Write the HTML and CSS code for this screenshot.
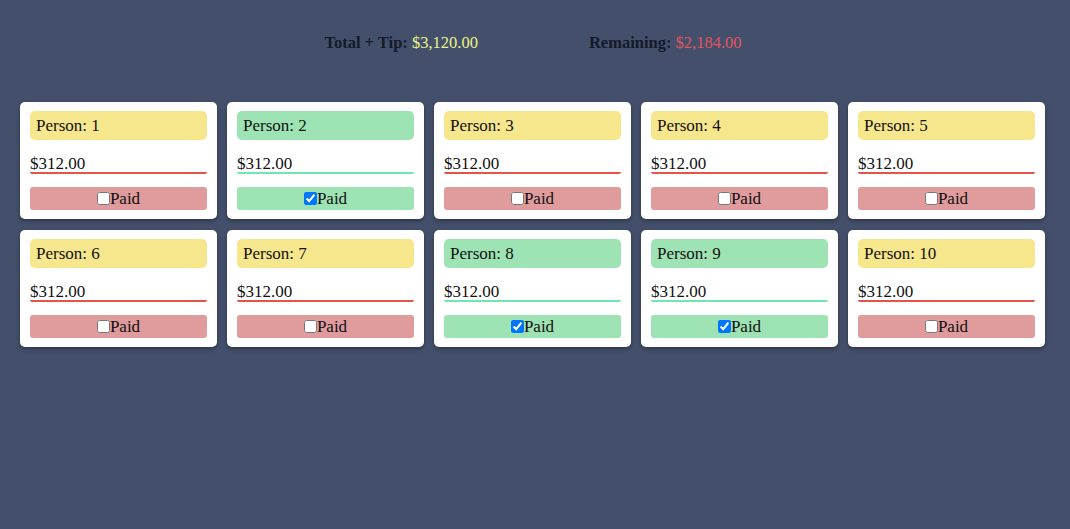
FILE: index.html
```html
<!DOCTYPE html>
<html>
<head>
<meta charset="utf-8">
<link rel="stylesheet" href="styles.css">
</head>
<body>
<header class="summary">
  <div class="stat"><b>Total + Tip:</b> <span class="total">$3,120.00</span></div>
  <div class="stat"><b>Remaining:</b> <span class="remaining">$2,184.00</span></div>
</header>
<main class="grid">
  <div class="card"><div class="name unpaid">Person: 1</div><div class="amount unpaid">$312.00</div><label class="paid unpaid"><input type="checkbox">Paid</label></div>
  <div class="card"><div class="name ok">Person: 2</div><div class="amount ok">$312.00</div><label class="paid ok"><input type="checkbox" checked>Paid</label></div>
  <div class="card"><div class="name unpaid">Person: 3</div><div class="amount unpaid">$312.00</div><label class="paid unpaid"><input type="checkbox">Paid</label></div>
  <div class="card"><div class="name unpaid">Person: 4</div><div class="amount unpaid">$312.00</div><label class="paid unpaid"><input type="checkbox">Paid</label></div>
  <div class="card"><div class="name unpaid">Person: 5</div><div class="amount unpaid">$312.00</div><label class="paid unpaid"><input type="checkbox">Paid</label></div>
  <div class="card"><div class="name unpaid">Person: 6</div><div class="amount unpaid">$312.00</div><label class="paid unpaid"><input type="checkbox">Paid</label></div>
  <div class="card"><div class="name unpaid">Person: 7</div><div class="amount unpaid">$312.00</div><label class="paid unpaid"><input type="checkbox">Paid</label></div>
  <div class="card"><div class="name ok">Person: 8</div><div class="amount ok">$312.00</div><label class="paid ok"><input type="checkbox" checked>Paid</label></div>
  <div class="card"><div class="name ok">Person: 9</div><div class="amount ok">$312.00</div><label class="paid ok"><input type="checkbox" checked>Paid</label></div>
  <div class="card"><div class="name unpaid">Person: 10</div><div class="amount unpaid">$312.00</div><label class="paid unpaid"><input type="checkbox">Paid</label></div>
</main>
</body>
</html>
```
FILE: styles.css
```css
html, body {
  margin: 0;
  padding: 0;
}
body {
  background: #44506b;
  font-family: "Liberation Serif", "DejaVu Serif", serif;
  color: #111;
  width: 1070px;
  height: 529px;
  overflow: hidden;
}
.summary {
  display: flex;
  justify-content: center;
  gap: 111px;
  padding-top: 33px;
  padding-right: 4px;
  height: 102px;
  box-sizing: border-box;
  font-size: 16.5px;
  line-height: 20px;
}
.stat b {
  color: #131a2a;
}
.total {
  color: #eef48a;
}
.remaining {
  color: #e0545f;
}
.grid {
  display: grid;
  grid-template-columns: repeat(5, 197px);
  column-gap: 10px;
  row-gap: 11px;
  padding-left: 20px;
}
.card {
  background: #fff;
  border-radius: 5px;
  box-shadow: 0 2px 4px rgba(0, 0, 0, 0.35);
  padding: 9px 10px 9px 10px;
  height: 117px;
  box-sizing: border-box;
  display: flex;
  flex-direction: column;
}
.name {
  height: 29px;
  border-radius: 5px;
  padding-left: 6px;
  font-size: 17px;
  line-height: 30px;
  box-sizing: border-box;
}
.name.unpaid {
  background: #f6e68c;
}
.name.ok {
  background: #9de3b3;
}
.amount {
  margin-top: 12px;
  height: 22px;
  font-size: 17px;
  line-height: 24px;
  box-sizing: border-box;
  border-radius: 0 0 2px 2px;
}
.amount.unpaid {
  border-bottom: 2px solid #e5544c;
}
.amount.ok {
  border-bottom: 2px solid #6ee6b0;
}
.paid {
  margin-top: 13px;
  height: 23px;
  border-radius: 3px;
  display: flex;
  align-items: center;
  justify-content: center;
  font-size: 17px;
  line-height: 23px;
}
.paid input {
  margin: 0;
  width: 13px;
  height: 13px;
}
.paid.unpaid {
  background: #e09b9d;
}
.paid.ok {
  background: #9de3b3;
}
```
